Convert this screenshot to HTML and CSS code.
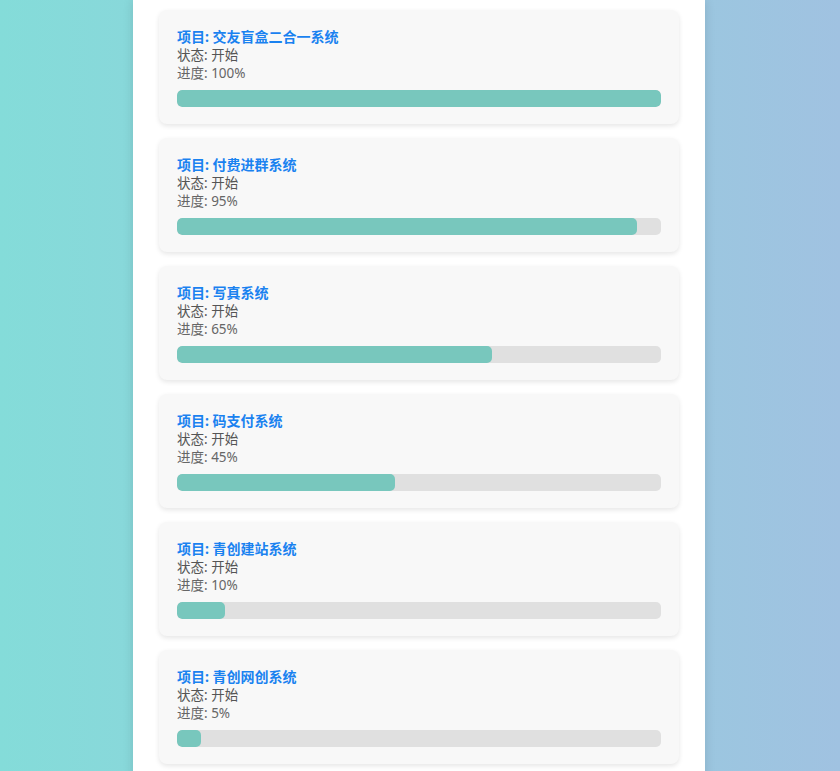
FILE: index.html
```html
<!DOCTYPE html>
<html lang="zh-CN">
<head>
<meta charset="utf-8">
<title>项目进度</title>
<link rel="stylesheet" href="styles.css">
</head>
<body>
<div class="container">
  <div class="card">
    <div class="title">项目: 交友盲盒二合一系统</div>
    <div class="status">状态: 开始</div>
    <div class="progress-text">进度: 100%</div>
    <div class="bar"><div class="fill" style="width:100%"></div></div>
  </div>
  <div class="card">
    <div class="title">项目: 付费进群系统</div>
    <div class="status">状态: 开始</div>
    <div class="progress-text">进度: 95%</div>
    <div class="bar"><div class="fill" style="width:95%"></div></div>
  </div>
  <div class="card">
    <div class="title">项目: 写真系统</div>
    <div class="status">状态: 开始</div>
    <div class="progress-text">进度: 65%</div>
    <div class="bar"><div class="fill" style="width:65%"></div></div>
  </div>
  <div class="card">
    <div class="title">项目: 码支付系统</div>
    <div class="status">状态: 开始</div>
    <div class="progress-text">进度: 45%</div>
    <div class="bar"><div class="fill" style="width:45%"></div></div>
  </div>
  <div class="card">
    <div class="title">项目: 青创建站系统</div>
    <div class="status">状态: 开始</div>
    <div class="progress-text">进度: 10%</div>
    <div class="bar"><div class="fill" style="width:10%"></div></div>
  </div>
  <div class="card">
    <div class="title">项目: 青创网创系统</div>
    <div class="status">状态: 开始</div>
    <div class="progress-text">进度: 5%</div>
    <div class="bar"><div class="fill" style="width:5%"></div></div>
  </div>
</div>
</body>
</html>
```
FILE: styles.css
```css
html, body {
  margin: 0;
  padding: 0;
  height: 100%;
}
body {
  background: linear-gradient(to right, #84dcd9, #a0c2e1);
  font-family: "Noto Sans", "Noto Sans CJK SC", sans-serif;
  overflow: hidden;
  padding-right: 2px;
  box-sizing: border-box;
}
.container {
  width: 572px;
  box-sizing: border-box;
  margin: 0 auto;
  padding: 10px 26px 20px;
  background: #ffffff;
  min-height: 100%;
  box-shadow: 0 0 10px rgba(0, 0, 0, 0.12);
  display: flex;
  flex-direction: column;
  gap: 14px;
}
.card {
  background: #f8f8f8;
  border-radius: 8px;
  padding: 18px 18px 17px;
  box-shadow: 0 2px 5px rgba(0, 0, 0, 0.1);
}
.title {
  font-size: 14px;
  font-weight: bold;
  color: #1a82f0;
  line-height: 18px;
}
.status {
  font-size: 13.5px;
  color: #555555;
  line-height: 18px;
}
.progress-text {
  font-size: 13.5px;
  color: #666666;
  line-height: 18px;
}
.bar {
  margin-top: 8px;
  height: 17px;
  background: #e0e0e0;
  border-radius: 5px;
  overflow: hidden;
}
.fill {
  height: 100%;
  background: #78c7bd;
  border-radius: 5px;
}
```
